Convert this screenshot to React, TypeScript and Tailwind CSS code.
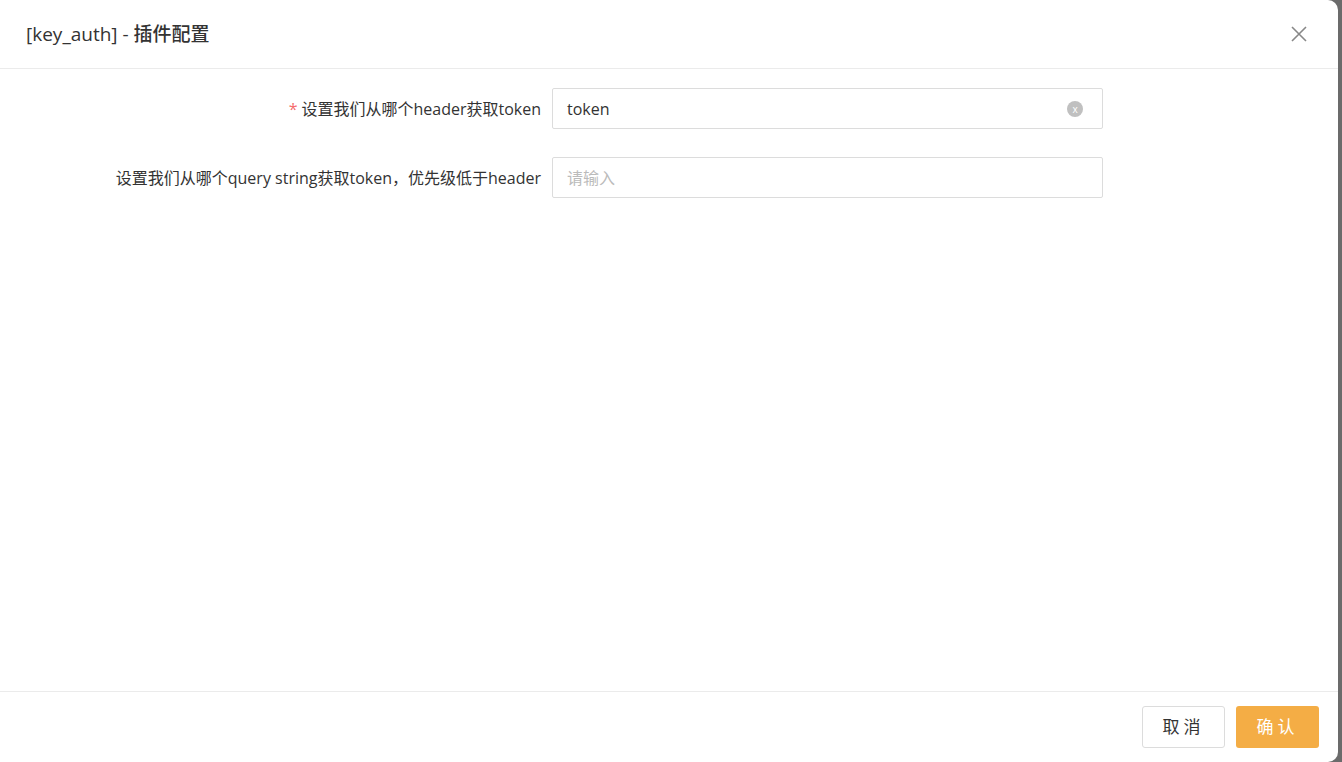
export default function App() {
  return (
    <div
      className="flex h-[762px] w-[1342px] bg-[#6b6b6b]"
      style={{ fontFamily: '"Open Sans", "Noto Sans CJK SC", sans-serif' }}
    >
      <div className="flex w-[1338px] flex-col rounded-r-[10px] bg-white">
        <div className="flex h-[69px] shrink-0 items-center justify-between border-b border-[#ebebeb] pl-[26px] pr-[30px]">
          <h2 className="text-[19px] font-medium text-[#333]">[key_auth] - 插件配置</h2>
          <svg width="18" height="18" viewBox="0 0 18 18" stroke="#888" strokeWidth="1.6">
            <path d="M2 2l14 14M16 2L2 16" />
          </svg>
        </div>
        <div className="flex flex-1 flex-col gap-7 pt-[19px]">
          <div className="flex items-center">
            <label className="w-[541px] text-right text-[16px] text-[#333]">
              <span className="mr-1 text-[#f56c6c]">*</span>设置我们从哪个header获取token
            </label>
            <div className="ml-[11px] flex h-[41px] w-[551px] items-center justify-between rounded-[2px] border border-[#dcdcdc] pl-[14px] pr-[19px] text-[16px] text-[#333]">
              <span>token</span>
              <span className="flex h-4 w-4 items-center justify-center rounded-full bg-[#c0c0c0] text-[10px] leading-none text-white">x</span>
            </div>
          </div>
          <div className="flex items-center">
            <label className="w-[541px] text-right text-[16px] text-[#333]">
              设置我们从哪个query string获取token，优先级低于header
            </label>
            <div className="ml-[11px] flex h-[41px] w-[551px] items-center rounded-[2px] border border-[#dcdcdc] pl-[14px] text-[16px] text-[#bbb]">
              请输入
            </div>
          </div>
        </div>
        <div className="flex h-[71px] shrink-0 items-center justify-end gap-[11px] border-t border-[#ebebeb] pr-[19px]">
          <button className="h-[42px] w-[83px] rounded-[3px] border border-[#dcdcdc] bg-white text-[17px] tracking-[4px] text-[#333]">取消</button>
          <button className="h-[42px] w-[83px] rounded-[3px] bg-[#f4ad45] text-[17px] tracking-[4px] text-white">确认</button>
        </div>
      </div>
    </div>
  );
}
